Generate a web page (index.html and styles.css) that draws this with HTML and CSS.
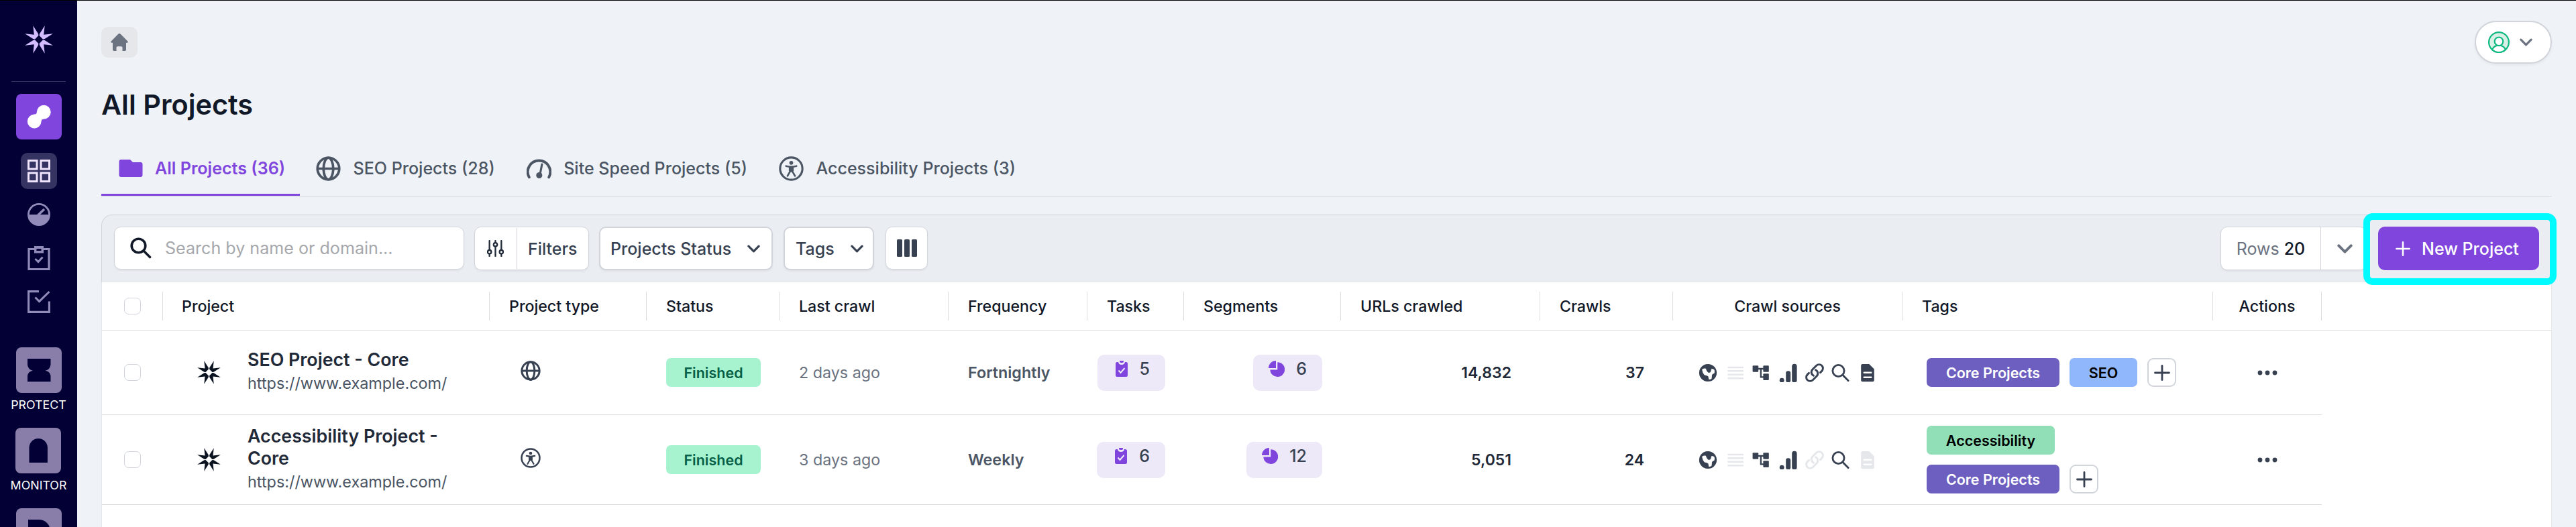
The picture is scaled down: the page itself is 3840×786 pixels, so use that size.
FILE: index.html
```html
<!DOCTYPE html>
<html lang="en">
<head>
    <meta charset="UTF-8">
    <meta name="viewport" content="width=device-width, initial-scale=1.0">
    <title>All Projects</title>
    <link rel="stylesheet" href="styles.css">
</head>
<body>
    <!-- Shared icons -->
    <svg class="sprite" width="0" height="0">
        <symbol id="star" viewBox="-21 -21 42 42">
            <path d="M-8.7-20.8 -1-8.6 -.6-5.9 -5.9-.6 -8.6-1 -20.8-8.7 -7.2-7.2Z"/>
            <path d="M8.7-20.8 1-8.6 .6-5.9 5.9-.6 8.6-1 20.8-8.7 7.2-7.2Z"/>
            <path d="M-8.7 20.8 -1 8.6 -.6 5.9 -5.9 .6 -8.6 1 -20.8 8.7 -7.2 7.2Z"/>
            <path d="M8.7 20.8 1 8.6 .6 5.9 5.9 .6 8.6 1 20.8 8.7 7.2 7.2Z"/>
        </symbol>
        <symbol id="globe" viewBox="0 0 36 36">
            <g fill="none" stroke="currentColor" stroke-width="3.6"><circle cx="18" cy="18" r="15.8"/><ellipse cx="18" cy="18" rx="7" ry="15.8"/><path d="M2 18h32"/></g>
        </symbol>
        <symbol id="access" viewBox="0 0 36 36">
            <circle cx="18" cy="18" r="16.2" fill="none" stroke="currentColor" stroke-width="3"/>
            <circle cx="18" cy="9.6" r="2.8"/>
            <path d="M10.5 14.3q7.5 2 15 0M16.6 17.5v4l-4 7M19.4 17.5v4l4 7" fill="none" stroke="currentColor" stroke-width="2.6" stroke-linecap="round" stroke-linejoin="round"/>
            <path d="M14.5 15h7v6.5L18 23l-3.5-1.5z"/>
        </symbol>
        <symbol id="chevron" viewBox="0 0 20 12"><path d="M2 2l8 8 8-8" fill="none" stroke="currentColor" stroke-width="3.4" stroke-linecap="round" stroke-linejoin="round"/></symbol>
        <symbol id="plus" viewBox="0 0 24 24"><path d="M12 1.5v21M1.5 12h21" fill="none" stroke="currentColor" stroke-width="2.8" stroke-linecap="round"/></symbol>
        <symbol id="tasks" viewBox="0 0 18 24">
            <path d="M2.5 2H4c.5 2.500 2 4 5 4s4.500-1.500 5-4h1.500Q18 2 18 4.500v17q0 2.500-2.500 2.500h-13Q0 24 0 21.500v-17Q0 2 2.500 2z"/>
            <path d="M6 0h6v1q0 2-2 2H8Q6 3 6 1z"/>
            <path d="M4.500 14.500l3 3.500 6-7" fill="none" stroke="#ede9f8" stroke-width="2"/>
        </symbol>
        <symbol id="pie" viewBox="0 0 24 24">
            <path d="M11 0v11H0A11 11 0 0 1 11 0z"/><path d="M13.300 2.200A10.900 10.900 0 1 1 2.400 13.400h10.900z"/>
        </symbol>
        <symbol id="earth" viewBox="0 0 28 28">
            <circle cx="14" cy="14" r="13.100"/>
            <path d="M5.300 8.800q3-1.800 5.700-1 .4 2.700 1.800 4.200 1.400 2 3 2 2-.2 2.700-2.500.2-2 1-3.500 2.600-.1 4 1.500 1 2.800-.2 5.500-2.800.4-3.300 2.500l-.4 5q-2 2-4.400 1.500l-.7-4.500-2-1.200-3.500-.8q-3.500-3.500-3.700-8.700z" fill="#fff"/>
        </symbol>
        <symbol id="lines" viewBox="0 0 28 28"><path d="M4.500 6H26M4.500 11.300H26M4.500 16.700H26M4.500 22.300H26" stroke="currentColor" stroke-width="2.600" stroke-linecap="round"/></symbol>
        <symbol id="tree" viewBox="0 0 28 28">
            <rect x="1.600" y="3.200" width="8.600" height="9.600" rx="1"/><rect x="17.400" y="3.200" width="8.400" height="9.600" rx="1"/><rect x="17.400" y="15.300" width="8.400" height="9.800" rx="1"/>
            <path d="M9 8h9M13.900 8v12.300h5" fill="none" stroke="currentColor" stroke-width="2.300"/>
        </symbol>
        <symbol id="bars" viewBox="0 0 28 28" overflow="visible">
            <circle cx="5.200" cy="25.200" r="3.400"/><rect x="11.200" y="11.300" width="7" height="17.300" rx="3.300"/><rect x="20.200" y=".7" width="7.400" height="27.900" rx="3.500"/>
        </symbol>
        <symbol id="link" viewBox="1 1 22 22">
            <path d="M13.190 8.688a4.500 4.500 0 0 1 1.242 7.244l-4.500 4.500a4.500 4.500 0 0 1-6.364-6.364l1.757-1.757m13.350-.622 1.757-1.757a4.500 4.500 0 0 0-6.364-6.364l-4.500 4.500a4.500 4.500 0 0 0 1.242 7.244" fill="none" stroke="currentColor" stroke-width="2.300" stroke-linecap="round"/>
        </symbol>
        <symbol id="search" viewBox="0 0 28 28"><g fill="none" stroke="currentColor" stroke-width="2.800" stroke-linecap="round"><circle cx="10.500" cy="11" r="8.600"/><path d="M16.800 17.200l8.400 8.600"/></g></symbol>
        <symbol id="doc" viewBox="0 0 28 28">
            <path d="M6.500 1h9.800l7.500 7.500V25q0 2.300-2.300 2.300h-15Q4.200 27.300 4.200 25V3.300Q4.200 1 6.500 1z"/>
            <path d="M8.800 13.800h10.400M8.800 20.700h10.400" stroke="#fff" stroke-width="2.600" stroke-linecap="round"/>
        </symbol>
        <symbol id="dots" viewBox="0 0 30 8"><circle cx="4" cy="4" r="3.400"/><circle cx="15" cy="4" r="3.400"/><circle cx="26" cy="4" r="3.400"/></symbol>
    </svg>

    <aside class="sidebar">
        <svg class="logo"><use href="#star"/></svg>
        <div class="divider"></div>
        <div class="module module-active">
            <svg viewBox="0 0 68 68"><circle cx="41.300" cy="27.200" r="10.400"/><circle cx="27.200" cy="41" r="10.400"/><path d="M30.900 27Q30.800 30.700 27 30.600L37.600 41Q38 37.500 41.500 37.600z"/></svg>
        </div>
        <nav class="side-nav">
            <a class="side-link active"><svg viewBox="0 0 34 34"><path d="M1.500 1.500H14V14H1.500zM20 1.500h12.500V14H20zM1.500 20H14v12.500H1.500zM20 20h12.500v12.500H20z" fill="none" stroke="currentColor" stroke-width="3"/></svg></a>
            <a class="side-link"><svg viewBox="0 0 34 34"><circle cx="17" cy="17" r="15.600" fill="none" stroke="currentColor" stroke-width="2.800"/><path d="M1 17h32a16 16 0 0 1-32 0z"/><path d="M15.500 18l9.500-9" stroke="currentColor" stroke-width="3.400"/></svg></a>
            <a class="side-link"><svg viewBox="0 0 34 36"><path d="M2 4.500h30v30H2z" fill="none" stroke="currentColor" stroke-width="3.200"/><path d="M10 0h14v10.500H10z"/><path d="M13.500 4h7v3h-7z" fill="#020034"/><path d="M11.500 19l4.500 4.500 6.500-7" fill="none" stroke="currentColor" stroke-width="3"/></svg></a>
            <a class="side-link"><svg viewBox="0 0 34 34"><path d="M17 1.600H1.600v30.800h30.800V16.500M11.500 10.500l6 6L32.500 2" fill="none" stroke="currentColor" stroke-width="3.100"/></svg></a>
        </nav>
        <div class="module-group">
            <div class="module"><svg viewBox="0 0 68 68"><path d="M17 17h34.500v9q-1 7.500-8 8.700 7 1 8 8v8.500H17v-8.500q1-7 8-8-7-1.200-8-8.700z"/></svg></div>
            <span class="module-label">PROTECT</span>
        </div>
        <div class="module-group">
            <div class="module"><svg viewBox="0 0 68 68"><path d="M20.500 52V29.700a13.700 13.700 0 0 1 27.400 0V52z"/></svg></div>
            <span class="module-label">MONITOR</span>
        </div>
        <div class="module-group">
            <div class="module"><svg viewBox="0 0 68 68"><path d="M18 17h16a17 17 0 0 1 0 34H18z"/></svg></div>
        </div>
    </aside>

    <main class="main">
        <header class="topbar">
            <a class="home"><svg viewBox="0 0 26 26"><path d="M13 0Q14 0 15 1l10.300 10.500q1.200 1.800-.8 2.300H23V24q0 2-2 2h-3.500v-5q0-1.800-1.800-1.800h-5.400Q8.500 19.200 8.500 21v5H5q-2 0-2-2V13.800H1.500q-2-.5-.8-2.300L11 1q1-1 2-1z"/></svg></a>
            <button class="user">
                <svg class="avatar" viewBox="0 0 32 32"><g fill="#d9f0e6" stroke="#10b981" stroke-width="2.200"><circle cx="16" cy="16" r="14.900"/><path d="M6 27q3-6.300 10-6.300T26 27q-4 4-10 4T6 27z" fill="#fff"/><circle cx="16" cy="14.800" r="6.300" fill="#fff"/></g></svg>
                <svg class="chev"><use href="#chevron"/></svg>
            </button>
        </header>

        <h1 class="title">All Projects</h1>

        <nav class="tabs">
            <a class="tab selected"><svg viewBox="0 0 36 36"><path d="M3.500 5H17l4 4h11.500q3 0 3 3v16q0 3-3 3h-29q-3 0-3-3V8q0-3 3-3z"/></svg>All Projects (36)</a>
            <a class="tab"><svg><use href="#globe"/></svg>SEO Projects (28)</a>
            <a class="tab"><svg viewBox="0 0 36 36"><path d="M3.700 30.500A16.300 16.300 0 1 1 32.300 30.500" fill="none" stroke="currentColor" stroke-width="3.800" stroke-linecap="round"/><path d="M22.300 11.800L19.500 26" stroke="currentColor" stroke-width="3" stroke-linecap="round"/><circle cx="18.300" cy="27.800" r="4.400"/></svg>Site Speed Projects (5)</a>
            <a class="tab"><svg><use href="#access"/></svg>Accessibility Projects (3)</a>
        </nav>

        <section class="panel">
            <div class="toolbar">
                <div class="box search"><svg viewBox="0 0 32 32"><g fill="none" stroke="currentColor" stroke-width="3.600" stroke-linecap="round"><circle cx="12.500" cy="12.500" r="10.300"/><path d="M20.500 20.500l9 9"/></g></svg>Search by name or domain...</div>
                <div class="box filters">
                    <span class="filters-icon"><svg viewBox="0 0 24 24"><g fill="#fff" stroke="currentColor" stroke-width="2.200" stroke-linecap="round"><path d="M3.500 1v22M12 1v22M20.500 1v22"/><circle cx="3.500" cy="17" r="2.600"/><circle cx="12" cy="6.500" r="2.600"/><circle cx="20.500" cy="17" r="2.600"/></g></svg></span>
                    <span class="filters-text">Filters</span>
                </div>
                <div class="box status">Projects Status<svg class="chev"><use href="#chevron"/></svg></div>
                <div class="box tags-filter">Tags<svg class="chev"><use href="#chevron"/></svg></div>
                <div class="box columns"><svg viewBox="0 0 30 26"><rect width="8" height="26" rx="1.500"/><rect x="11" width="8" height="26" rx="1.500"/><rect x="22" width="8" height="26" rx="1.500"/></svg></div>
                <div class="box rows"><span class="rows-text">Rows <b>20</b></span><span class="rows-arrow"><svg class="chev"><use href="#chevron"/></svg></span></div>
                <button class="new-project"><svg><use href="#plus"/></svg>New Project</button>
            </div>

            <div class="table">
                <div class="grid head">
                    <div class="th check"><i class="checkbox"></i></div>
                    <div class="th">Project</div>
                    <div class="th">Project type</div>
                    <div class="th">Status</div>
                    <div class="th">Last crawl</div>
                    <div class="th">Frequency</div>
                    <div class="th">Tasks</div>
                    <div class="th">Segments</div>
                    <div class="th">URLs crawled</div>
                    <div class="th">Crawls</div>
                    <div class="th center">Crawl sources</div>
                    <div class="th">Tags</div>
                    <div class="th center">Actions</div>
                </div>

                <div class="grid row">
                    <div class="check"><i class="checkbox"></i></div>
                    <div class="project"><svg><use href="#star"/></svg><div><div class="name">SEO Project - Core</div><div class="url">https://www.example.com/</div></div></div>
                    <div class="type"><svg><use href="#globe"/></svg></div>
                    <div class="cell"><span class="pill finished">Finished</span></div>
                    <div class="cell ago">2 days ago</div>
                    <div class="cell freq">Fortnightly</div>
                    <div class="count"><span class="badge"><svg class="tasks-icon"><use href="#tasks"/></svg>5</span></div>
                    <div class="count"><span class="badge"><svg class="pie-icon"><use href="#pie"/></svg>6</span></div>
                    <div class="number">14,832</div>
                    <div class="number">37</div>
                    <div class="sources">
                        <svg><use href="#earth"/></svg><svg class="off"><use href="#lines"/></svg><svg><use href="#tree"/></svg><svg><use href="#bars"/></svg><svg><use href="#link"/></svg><svg><use href="#search"/></svg><svg><use href="#doc"/></svg>
                    </div>
                    <div class="tags"><span class="pill core">Core Projects</span><span class="pill seo">SEO</span><span class="add"><svg><use href="#plus"/></svg></span></div>
                    <div class="actions"><svg><use href="#dots"/></svg></div>
                </div>

                <div class="grid row tall">
                    <div class="check"><i class="checkbox"></i></div>
                    <div class="project"><svg><use href="#star"/></svg><div><div class="name">Accessibility Project - Core</div><div class="url">https://www.example.com/</div></div></div>
                    <div class="type"><svg><use href="#access"/></svg></div>
                    <div class="cell"><span class="pill finished">Finished</span></div>
                    <div class="cell ago">3 days ago</div>
                    <div class="cell freq">Weekly</div>
                    <div class="count"><span class="badge"><svg class="tasks-icon"><use href="#tasks"/></svg>6</span></div>
                    <div class="count"><span class="badge"><svg class="pie-icon"><use href="#pie"/></svg>12</span></div>
                    <div class="number">5,051</div>
                    <div class="number">24</div>
                    <div class="sources">
                        <svg><use href="#earth"/></svg><svg class="off"><use href="#lines"/></svg><svg><use href="#tree"/></svg><svg><use href="#bars"/></svg><svg class="off"><use href="#link"/></svg><svg><use href="#search"/></svg><svg class="off"><use href="#doc"/></svg>
                    </div>
                    <div class="tags"><span class="pill accessibility">Accessibility</span><span class="pill core">Core Projects</span><span class="add"><svg><use href="#plus"/></svg></span></div>
                    <div class="actions"><svg><use href="#dots"/></svg></div>
                </div>
            </div>
        </section>
    </main>
</body>
</html>
```
FILE: styles.css
```css
* { box-sizing: border-box; }
body { margin: 0; height: 786px; display: flex; overflow: hidden; border-top: 1px solid #000; background: #eff3f8; color: #111827; font-family: Inter, "Liberation Sans", sans-serif; }
svg { display: block; flex: none; fill: currentColor; }
button { font-family: inherit; }
.sprite { position: absolute; }

/* Sidebar */
.sidebar { flex: none; width: 115px; height: 785px; padding-top: 37px; overflow: hidden; background: #020034; display: flex; flex-direction: column; align-items: center; }
.sidebar > * { flex: none; }
.logo { width: 42px; height: 42px; color: #d3bcff; }
.divider { width: 81px; height: 1px; margin: 41px 0 18px; background: #35335d; }
.module { width: 68px; height: 68px; border-radius: 8px; background: #897ea9; color: #020034; }
.module-active { background: #7f45dd; color: #fff; }
.side-nav { display: flex; flex-direction: column; gap: 11px; margin: 20px 0 41px; }
.side-link { width: 54px; height: 54px; border-radius: 10px; display: flex; align-items: center; justify-content: center; color: #908bb9; }
.side-link svg { width: 34px; height: 36px; }
.side-link.active { background: #353361; color: #efe5ff; }
.module-group { height: 120px; display: flex; flex-direction: column; align-items: center; }
.module-label { margin-top: 6px; font-size: 17.8px; line-height: 24px; color: #fff; }

/* Header */
.main { flex: 1; min-width: 0; padding: 30px 36px 0; }
.topbar { height: 64px; display: flex; align-items: center; justify-content: space-between; }
.home { width: 54px; height: 46px; border-radius: 10px; background: #e5e7eb; color: #6b7280; display: flex; align-items: center; justify-content: center; }
.home svg { width: 26px; height: 26px; }
.user { width: 115px; height: 64px; padding: 0 0 0 18px; border: 2px solid #d1d5db; border-radius: 32px; background: #fff; color: #6b7280; display: flex; align-items: center; gap: 15px; box-shadow: 0 2px 4px rgba(0,0,0,.05); }
.avatar { width: 32px; height: 32px; }
.chev { width: 19px; height: 12px; }
.title { margin: 37px 0 29px; font-size: 41.4px; line-height: 49px; font-weight: 600; }

/* Tabs */
.tabs { height: 83px; display: flex; border-bottom: 1px solid #d1d5db; }
.tab { height: 82px; padding: 0 23px 0 24px; display: flex; align-items: center; gap: 18.5px; font-size: 25.05px; font-weight: 500; color: #4b5563; }
.tab svg { width: 37px; height: 37px; }
.tab.selected { width: 296px; padding: 0 0 0 26px; gap: 18px; font-size: 25.1px; font-weight: 600; color: #7f45dd; box-shadow: inset 0 -3px #7f45dd; }
.tab.selected svg { width: 36px; height: 36px; }

/* Toolbar */
.panel { height: 466px; margin-top: 27px; border-radius: 16px 16px 0 0; background: #fff; }
.toolbar { height: 101px; padding: 17px 18px 0; display: flex; align-items: flex-start; border: 1px solid #d1d5db; border-bottom-color: #e5e7eb; border-radius: 16px 16px 0 0; background: #eaedf2; font-size: 25px; font-weight: 500; color: #374151; }
.box { height: 65px; display: flex; align-items: center; border: 1px solid #d1d5db; border-radius: 10px; background: #fff; box-shadow: 0 2px 3px rgba(0,0,0,.05); }
.search { width: 522px; height: 64px; padding-left: 23px; gap: 20px; font-size: 25.1px; font-weight: 400; color: #a6a8ac; }
.search svg { width: 32px; height: 32px; color: #111827; }
.filters { width: 171px; margin-left: 15px; align-items: stretch; font-size: 24.9px; }
.filters-icon { width: 63px; margin: 1px 0; padding-left: 18px; display: flex; align-items: center; border-right: 1px solid #d1d5db; color: #1f2937; }
.filters-icon svg { width: 25px; height: 25px; }
.filters-text { padding-left: 16px; display: flex; align-items: center; }
.status { width: 259px; margin-left: 15px; padding-left: 15px; gap: 24px; border-width: 2px; }
.tags-filter { width: 135px; margin-left: 16px; padding-left: 16px; gap: 24px; border-width: 2px; }
.columns { width: 63px; height: 64px; margin-left: 17px; justify-content: center; }
.columns svg { width: 30px; height: 26px; }
.rows { width: 218px; margin-left: auto; align-items: stretch; color: #6b7280; font-weight: 400; }
.rows-text { width: 149px; display: flex; align-items: center; justify-content: center; gap: 7px; border-right: 1px solid #d1d5db; }
.rows b { font-weight: 500; color: #111827; }
.rows-arrow { padding-left: 24px; display: flex; align-items: center; }
.rows .chev { width: 23px; height: 14px; }
.new-project { position: relative; width: 240px; height: 65px; margin-left: 17px; padding: 0 0 0 26px; display: flex; align-items: center; gap: 17px; border: 0; border-radius: 10px; background: #7f45dd; color: #fff; font-size: 25px; font-weight: 500; }
.new-project svg { width: 22px; height: 22px; }
/* highlight ring around the button */
.new-project::after { content: ""; position: absolute; inset: -20px -26px -22px -22px; border: 10px solid #00fbff; border-radius: 14px; }

/* Table */
.table { height: 365px; border: solid #e5e7eb; border-width: 0 1px; }
.grid { display: grid; grid-template-columns: 91px 487px 234px 198px 252px 207px 144px 234px 297px 198px 342px 463px 162px; }
.head { height: 72px; border-bottom: 1px solid #dcdee1; }
.th { height: 43px; margin-top: 14px; padding-left: 29px; display: flex; align-items: center; border-right: 1px solid #dcdee1; font-size: 23.2px; font-weight: 500; }
.th.check + .th { padding-left: 28px; }
.th.center { padding-left: 0; justify-content: center; }
.th.check, .check { padding-left: 33px; display: flex; align-items: center; }
.checkbox { width: 25px; height: 25px; border: 1px solid #d1d5db; border-radius: 7px; background: #fff; }
.row { width: 3309px; height: 126px; border-bottom: 1px solid #dcdee1; }
.row.tall { height: 134px; }
.row > div { display: flex; align-items: center; }
.project { padding: 0 60px 0 51px; gap: 40px; }
.project svg { width: 35px; height: 35px; color: #0b1220; }
.name { font-size: 26.8px; line-height: 33px; font-weight: 600; color: #1f2937; }
.url { font-size: 23.4px; line-height: 38px; color: #4b5563; }
.type { padding: 0 0 5px 46px; color: #374151; }
.type svg { width: 30px; height: 30px; }
.cell { padding-left: 29px; font-size: 23.3px; }
.pill { height: 43px; padding: 0 28px; display: flex; align-items: center; justify-content: center; border-radius: 7px; font-size: 21.5px; font-weight: 600; white-space: nowrap; }
.finished { width: 141px; padding: 0; background: #a7f3d0; color: #065f46; }
.ago { color: #6b7280; }
.freq { font-weight: 600; color: #4b5563; }
.count { justify-content: flex-end; padding-right: 28px; }
.badge { height: 54px; padding: 0 23px 11px 27px; display: flex; align-items: center; border-radius: 10px; background: #ede9f8; color: #374151; font-size: 25px; font-weight: 500; }
.badge svg { color: #7f45dd; }
.tasks-icon { width: 18px; height: 24px; margin-right: 18px; }
.pie-icon { width: 24px; height: 24px; margin: 0 17px 0 -4px; }
.number { justify-content: flex-end; padding-right: 43px; font-size: 23px; font-weight: 600; color: #1f2937; }
.sources { padding-left: 38px; gap: 11.7px; color: #374151; }
.sources svg { width: 28px; height: 28px; }
.sources .off { color: #e5e7eb; }
.tags { padding: 0 29px 0 36px; flex-wrap: wrap; align-content: center; gap: 15px; }
.core { width: 198px; background: #6d5fc0; color: #fff; }
.seo { width: 101px; background: #90b6fb; color: #000; }
.accessibility { width: 191px; background: #90dfb6; color: #000; }
.add { width: 43px; height: 43px; border: 2px solid #d1d5db; border-radius: 9px; display: flex; align-items: center; justify-content: center; color: #374151; }
.add svg { width: 24px; height: 24px; }
.actions { justify-content: center; color: #374151; }
.actions svg { width: 30px; height: 8px; }
```
